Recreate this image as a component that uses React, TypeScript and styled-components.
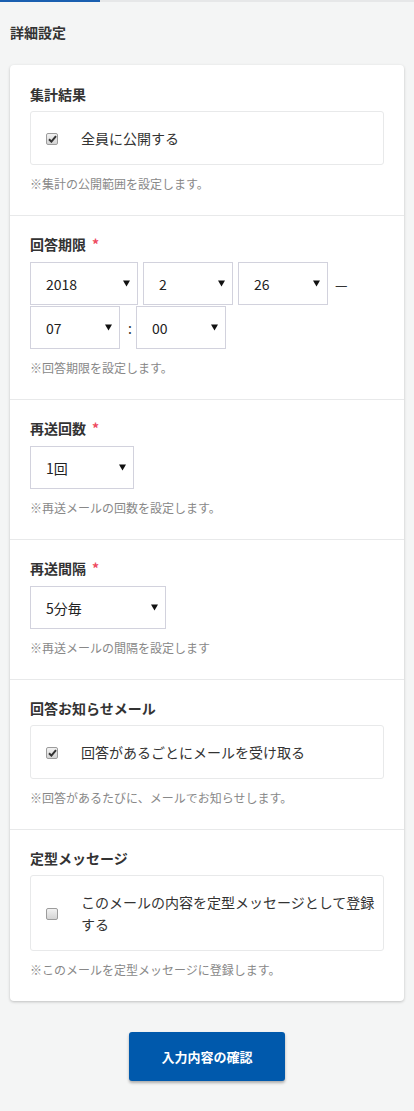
import React from "react";
import styled, { createGlobalStyle } from "styled-components";

const Global = createGlobalStyle`
  html, body { margin: 0; padding: 0; background: #f4f5f5; }
  body { font-family: "Noto Sans CJK JP", "Noto Sans", sans-serif; color: #333; }
  * { box-sizing: border-box; }
`;

const Page = styled.div`
  width: 414px;
  min-height: 1111px;
  background: #f4f5f5;
`;

const TopStrip = styled.div`
  height: 2px;
  background: #e6e7e8;
  display: flex;
`;

const TopActive = styled.div`
  width: 100px;
  background: #1a5fb0;
`;

const Main = styled.div`
  padding: 0 10px;
`;

const PageTitle = styled.h2`
  margin: 20px 0 23px;
  font-size: 14px;
  line-height: 20px;
  font-weight: 700;
  color: #333;
`;

const Card = styled.div`
  background: #fff;
  border-radius: 4px;
  box-shadow: 0 1px 3px rgba(0, 0, 0, 0.22);
`;

const Section = styled.section`
  padding: 18px 20px 22px;
  border-top: 1px solid #e8e9ea;
  &:first-child {
    border-top: none;
    padding-top: 19px;
  }
`;

const Title = styled.div`
  font-size: 14px;
  line-height: 20px;
  font-weight: 700;
  color: #333;
  margin-bottom: 7px;
  display: flex;
  align-items: center;
`;

const Required = styled.span`
  color: #ee4a5f;
  margin-left: 6px;
  font-weight: 700;
`;

const CheckBoxRow = styled.label`
  display: flex;
  align-items: center;
  border: 1px solid #e8e9ea;
  border-radius: 3px;
  padding: 15px 6px 15px 15px;
  min-height: 54px;
`;

const Check = styled.span`
  flex: none;
  width: 12px;
  height: 12px;
  border: 1px solid #9c9c9c;
  border-radius: 2px;
  background: linear-gradient(#f2f2f2, #d4d4d4);
  display: flex;
  align-items: center;
  justify-content: center;
  margin-right: 23px;
  margin-top: 2px;
`;

const CheckLabel = styled.span`
  font-size: 14px;
  line-height: 22px;
  color: #333;
`;

const Note = styled.div`
  margin-top: 10px;
  font-size: 12px;
  line-height: 18px;
  color: #888;
`;

const Selects = styled.div`
  display: flex;
  flex-wrap: wrap;
  align-items: center;
  row-gap: 1px;
  margin-top: 8px;
`;

const Select = styled.div<{ $w: number }>`
  width: ${(p) => p.$w}px;
  height: 43px;
  border: 1px solid #d2d2dd;
  display: flex;
  align-items: center;
  justify-content: space-between;
  padding: 0 7px 0 15px;
  font-size: 14px;
  color: #222;
  margin-right: 5px;
`;

const Sep = styled.span<{ $l: number; $r: number }>`
  font-size: 14px;
  color: #333;
  margin-left: ${(p) => p.$l}px;
  margin-right: ${(p) => p.$r}px;
`;

const ButtonWrap = styled.div`
  display: flex;
  justify-content: center;
  padding: 31px 0 30px;
`;

const Button = styled.button`
  width: 156px;
  height: 49px;
  background: #0059ac;
  color: #fff;
  border: none;
  border-radius: 3px;
  font-family: "Noto Sans CJK JP", sans-serif;
  font-size: 13px;
  font-weight: 700;
  box-shadow: 0 2px 3px rgba(0, 0, 0, 0.3);
`;

const CheckMark = () => (
  <svg width="9" height="8" viewBox="0 0 9 8">
    <path d="M1 4.2 L3.4 6.6 L8 1.2" fill="none" stroke="#333" strokeWidth="2" />
  </svg>
);

const ArrowIcon = () => (
  <svg width="7" height="7" viewBox="0 0 7 7">
    <path d="M0 0.5 H7 L3.5 6.5 Z" fill="#111" />
  </svg>
);

const SelectBox = ({ w, value }: { w: number; value: string }) => (
  <Select $w={w}>
    <span>{value}</span>
    <ArrowIcon />
  </Select>
);

const CheckItem = ({ on, label }: { on: boolean; label: string }) => (
  <CheckBoxRow>
    <Check>{on && <CheckMark />}</Check>
    <CheckLabel>{label}</CheckLabel>
  </CheckBoxRow>
);

export default function App() {
  return (
    <Page>
      <Global />
      <TopStrip>
        <TopActive />
      </TopStrip>
      <Main>
        <PageTitle>詳細設定</PageTitle>
        <Card>
          <Section>
            <Title>集計結果</Title>
            <CheckItem on label="全員に公開する" />
            <Note>※集計の公開範囲を設定します。</Note>
          </Section>
          <Section>
            <Title>
              回答期限<Required>*</Required>
            </Title>
            <Selects>
              <SelectBox w={108} value="2018" />
              <SelectBox w={90} value="2" />
              <SelectBox w={90} value="26" />
              <Sep $l={2} $r={20}>—</Sep>
              <SelectBox w={90} value="07" />
              <Sep $l={3} $r={4}>:</Sep>
              <SelectBox w={90} value="00" />
            </Selects>
            <Note>※回答期限を設定します。</Note>
          </Section>
          <Section>
            <Title>
              再送回数<Required>*</Required>
            </Title>
            <Selects>
              <SelectBox w={104} value="1回" />
            </Selects>
            <Note>※再送メールの回数を設定します。</Note>
          </Section>
          <Section>
            <Title>
              再送間隔<Required>*</Required>
            </Title>
            <Selects>
              <SelectBox w={136} value="5分毎" />
            </Selects>
            <Note>※再送メールの間隔を設定します</Note>
          </Section>
          <Section>
            <Title>回答お知らせメール</Title>
            <CheckItem on label="回答があるごとにメールを受け取る" />
            <Note>※回答があるたびに、メールでお知らせします。</Note>
          </Section>
          <Section>
            <Title>定型メッセージ</Title>
            <CheckItem on={false} label="このメールの内容を定型メッセージとして登録する" />
            <Note>※このメールを定型メッセージに登録します。</Note>
          </Section>
        </Card>
        <ButtonWrap>
          <Button>入力内容の確認</Button>
        </ButtonWrap>
      </Main>
    </Page>
  );
}
